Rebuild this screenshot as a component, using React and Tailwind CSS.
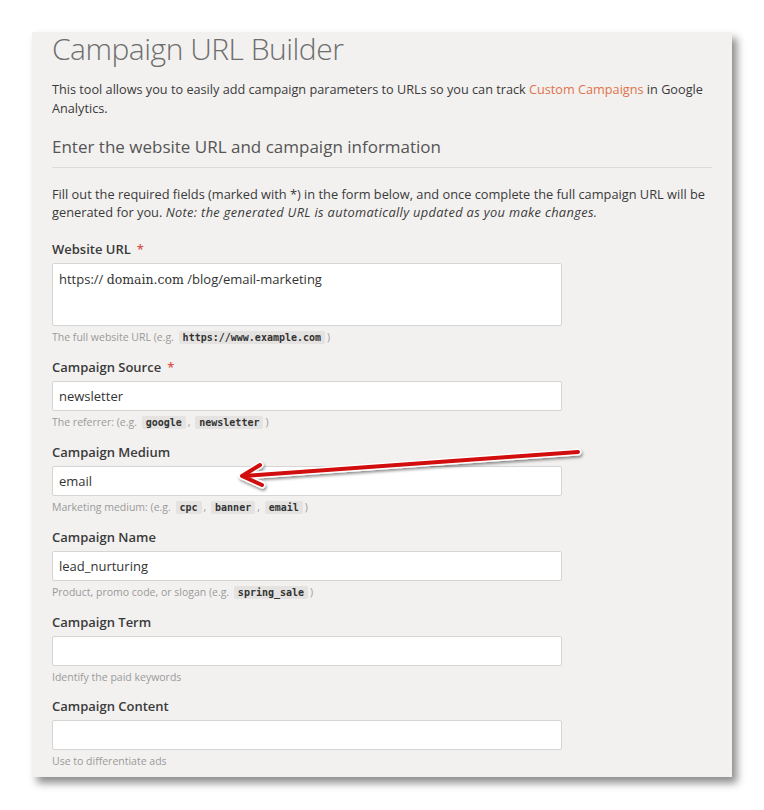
import React from 'react';

const sans = { fontFamily: '"Open Sans", "Noto Sans", sans-serif' };

const Code = ({ children }) => (
  <code className="mx-[2px] rounded-[2px] bg-[#e4e3e2] px-[4px] py-[1px] font-['DejaVu_Sans_Mono',monospace] text-[10px] font-bold text-[#333]">
    {children}
  </code>
);

const Field = ({ label, required, value, help, tall }) => (
  <div className="mb-[13px]">
    <label className="block text-[13px] font-semibold leading-[18px] text-[#3a3a3a]">
      {label}
      {required && <span className="ml-[6px] text-[#d9534f]">*</span>}
    </label>
    <div
      className={`mt-[5px] w-[510px] rounded-[2px] border border-[#d6d5d4] bg-white px-[6px] text-[13px] text-[#333] ${
        tall ? 'h-[63px] pt-[6px] leading-[18px]' : 'h-[30px] leading-[28px]'
      }`}
    >
      {value}
    </div>
    <p className="mt-[4px] text-[10.5px] leading-[14px] text-[#9a9a9a]">{help}</p>
  </div>
);

export default function App() {
  return (
    <div className="min-h-[810px] bg-white pl-[32px] pt-[32px]" style={sans}>
      <div className="relative h-[745px] w-[700px] bg-[#f2f1f0] px-[20px] shadow-[5px_6px_8px_rgba(0,0,0,0.45)]">
        <h1 className="text-[30px] font-light leading-[34px] tracking-[-0.5px] text-[#6e6e6e]">Campaign URL Builder</h1>
        <p className="mt-[14px] text-[12.7px] leading-[19px] text-[#3a3a3a]">
          This tool allows you to easily add campaign parameters to URLs so you can track{' '}
          <a className="text-[#e0734a]">Custom Campaigns</a> in Google Analytics.
        </p>
        <h2 className="mt-[17px] border-b border-[#dddcdb] pb-[8px] text-[17px] leading-[24px] text-[#555]">
          Enter the website URL and campaign information
        </h2>
        <p className="mt-[17px] text-[12.8px] leading-[18px] text-[#3a3a3a]">
          Fill out the required fields (marked with *) in the form below, and once complete the full campaign URL will be
          generated for you.{' '}
          <em className="tracking-[0.35px]">Note: the generated URL is automatically updated as you make changes.</em>
        </p>
        <div className="mt-[19px]">
          <Field
            label="Website URL"
            required
            tall
            value={
              <>
                https:// <span className="font-['DejaVu_Serif',serif] text-[12.5px]">domain.com</span> /blog/email-marketing
              </>
            }
            help={
              <>
                The full website URL (e.g. <Code>https://www.example.com</Code>)
              </>
            }
          />
          <Field
            label="Campaign Source"
            required
            value="newsletter"
            help={
              <>
                The referrer: (e.g. <Code>google</Code>, <Code>newsletter</Code>)
              </>
            }
          />
          <Field
            label="Campaign Medium"
            value="email"
            help={
              <>
                Marketing medium: (e.g. <Code>cpc</Code>, <Code>banner</Code>, <Code>email</Code>)
              </>
            }
          />
          <Field
            label="Campaign Name"
            value="lead_nurturing"
            help={
              <>
                Product, promo code, or slogan (e.g. <Code>spring_sale</Code>)
              </>
            }
          />
          <Field label="Campaign Term" value="" help="Identify the paid keywords" />
          <Field label="Campaign Content" value="" help="Use to differentiate ads" />
        </div>

        {/* annotation arrow pointing at the medium field */}
        <svg className="pointer-events-none absolute left-0 top-0" width="700" height="745">
          <defs>
            <filter id="arrowShadow" x="-10%" y="-50%" width="120%" height="200%">
              <feDropShadow dx="1" dy="2" stdDeviation="1.5" floodColor="#000" floodOpacity="0.45" />
            </filter>
          </defs>
          <g filter="url(#arrowShadow)" strokeLinecap="round" strokeLinejoin="round" fill="none">
            <path d="M546 420 L212 444 M228 433 L210 444 L230 453" stroke="#fff" strokeWidth="7" />
            <path d="M546 420 L212 444 M228 433 L210 444 L230 453" stroke="#d10d0d" strokeWidth="4" />
          </g>
        </svg>
      </div>
    </div>
  );
}
